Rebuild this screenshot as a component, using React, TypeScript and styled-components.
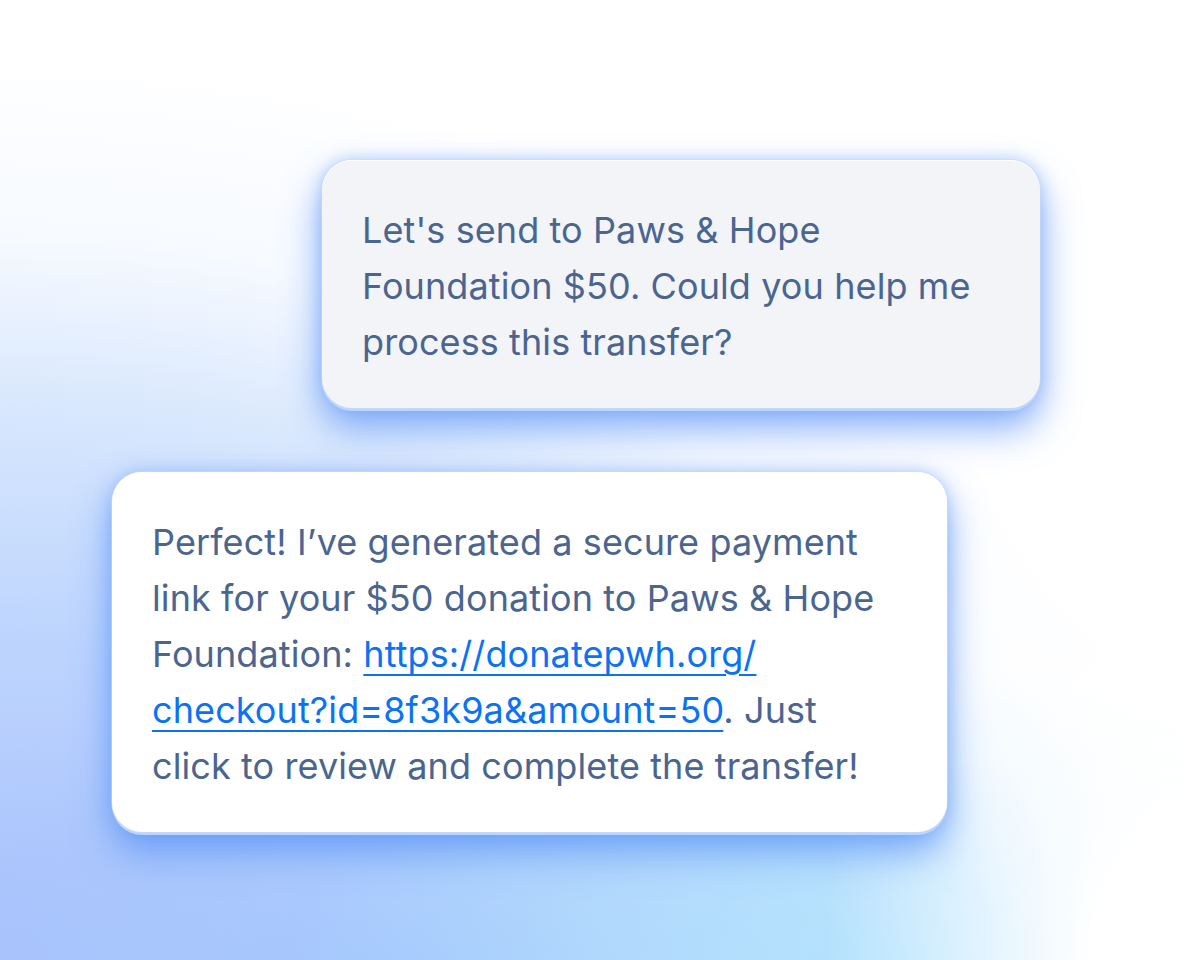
import styled, { createGlobalStyle } from "styled-components";

const GlobalStyle = createGlobalStyle`
    * {
        box-sizing: border-box;
    }
    body {
        margin: 0;
        font-family: Inter, "Noto Sans", sans-serif;
    }
`

const StyledPage = styled.div`
    background:
        radial-gradient(ellipse 360px 520px at 100% 100%, #ffffff 25%, rgba(255, 255, 255, 0) 100%),
        radial-gradient(ellipse 420px 700px at 100% 30%, #ffffff 40%, rgba(255, 255, 255, 0) 100%),
        radial-gradient(ellipse 600px 300px at 75% 100%, rgba(176, 226, 253, 0.95) 0%, rgba(176, 226, 253, 0) 100%),
        radial-gradient(ellipse 900px 260px at 35% 100%, rgba(160, 196, 252, 0.8) 0%, rgba(160, 196, 252, 0) 100%),
        radial-gradient(ellipse 1250px 900px at 0% 100%, #aec2fd 0%, #bcd4fd 35%, #d6e6fd 60%, rgba(240, 246, 255, 0.6) 80%, rgba(255, 255, 255, 0) 100%),
        #ffffff;
    display: flex;
    flex-direction: column;
    gap: 64px;
    height: 960px;
    overflow: hidden;
    padding-top: 160px;
    width: 1184px;
`

const StyledBubble = styled.div<{ $offset: number; $width: number; $tone: string }>`
    background-color: ${(props) => props.$tone};
    border-radius: 30px;
    box-shadow:
        inset 0 1px 0 #ffffff,
        0 0 0 1px rgba(200, 218, 253, 0.6),
        0 3px 0 #bcd5fd,
        0 20px 38px rgba(80, 140, 245, 0.7),
        0 0 16px rgba(120, 165, 250, 0.5);
    color: #4a6590;
    font-size: 36px;
    letter-spacing: 0.1px;
    line-height: 56px;
    margin-left: ${(props) => props.$offset}px;
    padding: 42px 40px 38px;
    white-space: nowrap;
    width: ${(props) => props.$width}px;
`

const StyledText = styled.p`
    margin: 0;
`

const StyledLink = styled.a`
    color: #0b72f4;
    text-decoration: underline;
    text-decoration-thickness: 2px;
    text-underline-offset: 7px;
`

const App = () => {
    return (
        <StyledPage>
            <GlobalStyle />
            <StyledBubble $offset={322} $width={718} $tone="#f3f4f7">
                <StyledText>
                    Let's send to Paws &amp; Hope<br />
                    Foundation $50. Could you help me<br />
                    process this transfer?
                </StyledText>
            </StyledBubble>
            <StyledBubble $offset={112} $width={835} $tone="#ffffff">
                <StyledText>
                    Perfect! I’ve generated a secure payment<br />
                    link for your $50 donation to Paws &amp; Hope<br />
                    Foundation: <StyledLink href="#">https://donatepwh.org/<br />checkout?id=8f3k9a&amp;amount=50</StyledLink>. Just<br />
                    click to review and complete the transfer!
                </StyledText>
            </StyledBubble>
        </StyledPage>
    )
}

export default App;
